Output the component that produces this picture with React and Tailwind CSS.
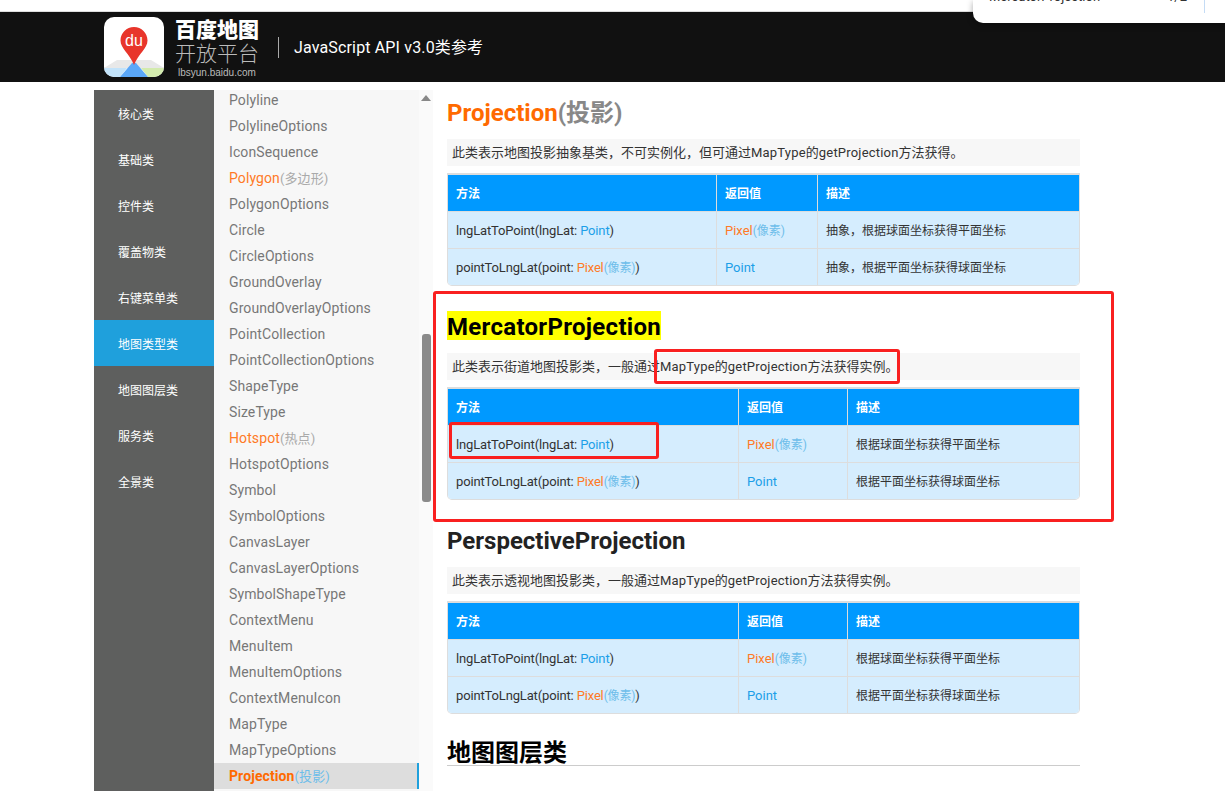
const tabs = ["核心类", "基础类", "控件类", "覆盖物类", "右键菜单类", "地图类型类", "地图图层类", "服务类", "全景类"];

const classes = [
  ["Polyline"],
  ["PolylineOptions"],
  ["IconSequence"],
  ["Polygon", "(多边形)"],
  ["PolygonOptions"],
  ["Circle"],
  ["CircleOptions"],
  ["GroundOverlay"],
  ["GroundOverlayOptions"],
  ["PointCollection"],
  ["PointCollectionOptions"],
  ["ShapeType"],
  ["SizeType"],
  ["Hotspot", "(热点)"],
  ["HotspotOptions"],
  ["Symbol"],
  ["SymbolOptions"],
  ["CanvasLayer"],
  ["CanvasLayerOptions"],
  ["SymbolShapeType"],
  ["ContextMenu"],
  ["MenuItem"],
  ["MenuItemOptions"],
  ["ContextMenuIcon"],
  ["MapType"],
  ["MapTypeOptions"],
];

function Logo() {
  return (
    <svg width="60" height="60" viewBox="0 0 60 60" className="shrink-0">
      <defs>
        <clipPath id="logo-clip">
          <rect width="60" height="60" rx="10" />
        </clipPath>
      </defs>
      <g clipPath="url(#logo-clip)">
        <rect width="60" height="60" fill="#fff" />
        <path d="M13 43h34l13 8H0z" fill="#e8e8e8" />
        <path d="M0 51h23L16 60H0z" fill="#c3e3fa" />
        <path d="M60 51H37l7 9h16z" fill="#d3ebae" />
        <path d="M28 46h4l12 14H16z" fill="#5aa7f8" />
        <path d="M30 10c-7.500 0-13.500 6-13.500 13.500 0 8 9 13 13.500 24.500 4.500-11.500 13.500-16.500 13.500-24.500C43.500 16 37.500 10 30 10z" fill="#e8352b" />
        <text x="30" y="29" textAnchor="middle" fontSize="16" fontWeight="500" fill="#fff" fontFamily="Liberation Sans, sans-serif">du</text>
      </g>
    </svg>
  );
}

function PixelLink() {
  return (
    <>
      <span className="text-[#ff7a26]">Pixel</span>
      <span className="text-[12px] text-[#6dbdea]">(像素)</span>
    </>
  );
}

function PointLink() {
  return <span className="text-[#1c9fe8]">Point</span>;
}

function MethodTable({ cols, rows }) {
  return (
    <div className="border border-t-2 border-[#dddddd] rounded-b-[5px] overflow-hidden text-[13px] leading-[38px] text-[#333]">
      <div className={`grid ${cols} bg-[#0099ff] text-white text-[12px] font-bold h-[36px] divide-x divide-[#dddddd]`}>
        <div className="pl-2">方法</div>
        <div className="pl-2">返回值</div>
        <div className="pl-2">描述</div>
      </div>
      {rows.map((row, i) => (
        <div key={i} className={`grid ${cols} bg-[#d5edfe] border-t border-[#dddddd] h-[37px] divide-x divide-[#dddddd]`}>
          <div className="pl-2 tracking-[-0.15px]">{row[0]}</div>
          <div className="pl-2">{row[1]}</div>
          <div className="pl-2 text-[12px]">{row[2]}</div>
        </div>
      ))}
    </div>
  );
}

function Latin({ children }) {
  return <span className="tracking-[0.2px]">{children}</span>;
}

function Desc({ before, after }) {
  return (
    <p className="mt-[13px] mb-[7px] h-[27px] bg-[#f7f7f7] pl-[5px] text-[13px] leading-[28px] text-[#333]">
      {before}
      <Latin>MapType</Latin>的<Latin>getProjection</Latin>
      {after}
    </p>
  );
}

export default function App() {
  const toPoint = <>lngLatToPoint(lngLat: <PointLink />)</>;
  const toLngLat = <>pointToLngLat(point: <PixelLink />)</>;
  const wide = "grid-cols-[291px_109px_1fr]";

  return (
    <div className="relative h-[791px] overflow-hidden bg-white font-['Roboto','Noto_Sans_CJK_SC',sans-serif]">
      <div className="mt-[11px] h-px bg-[#dddddd]" />
      <header className="flex h-[70px] items-center bg-[#111111] pl-[104px]">
        <Logo />
        <div className="ml-[11px] flex w-[86px] flex-col pt-[4px]">
          <span className="text-[21px] font-black leading-[24px] text-white whitespace-nowrap">百度地图</span>
          <span className="text-[21px] font-light leading-[24px] text-[#bbbbbb] whitespace-nowrap">开放平台</span>
          <span className="font-['Liberation_Sans',sans-serif] text-[10px] leading-[14px] text-[#bbbbbb] pl-[3px]">lbsyun.baidu.com</span>
        </div>
        <div className="ml-[17px] h-[21px] w-px bg-[#aaaaaa]" />
        <h1 className="ml-[15px] pt-[2px] text-[16px] tracking-[0.15px] text-white">JavaScript API v3.0类参考</h1>
      </header>

      <div className="mt-[8px] flex pl-[94px]">
        <nav className="h-[701px] w-[120px] shrink-0 bg-[#5e5f5e]">
          {tabs.map((tab, i) => (
            <div key={tab} className={`h-[46px] pl-[24px] text-[12px] leading-[50px] text-white ${i === 5 ? "bg-[#1fa0dc]" : ""}`}>
              {tab}
            </div>
          ))}
        </nav>

        <div className="h-[701px] w-[205px] shrink-0 overflow-hidden bg-[#f7f7f7]">
          <ul className="-mt-[3px] text-[14px] leading-[26px] tracking-[0.1px] text-[#777]">
            {classes.map(([name, note]) => (
              <li key={name} className="h-[26px] pl-[15px]">
                {note ? <span className="text-[#ff7a26]">{name}</span> : name}
                {note && <span className="text-[13px] text-[#aaaaaa]">{note}</span>}
              </li>
            ))}
            <li className="h-[26px] border-r-2 border-[#1fa0dc] bg-[#dddddd] pl-[15px] font-bold text-[#ff6a00]">
              Projection<span className="text-[13px] font-normal text-[#6dbdea]">(投影)</span>
            </li>
          </ul>
        </div>

        <div className="relative h-[701px] w-[14px] shrink-0 bg-[#fafafa]">
          <div className="absolute left-[2px] top-[5px] h-0 w-0 border-x-[5px] border-b-[6px] border-x-transparent border-b-[#888888]" />
          <div className="absolute left-[3px] top-[244px] h-[168px] w-[9px] rounded-[3px] bg-[#8a8a8a]" />
        </div>

        <main className="ml-[14px] w-[633px] pt-[7px]">
          <h2 className="h-[29px] text-[24px] font-bold leading-[32px]">
            <span className="text-[#ff6a00]">Projection</span>
            <span className="text-[#888888]">(投影)</span>
          </h2>
          <Desc before="此类表示地图投影抽象基类，不可实例化，但可通过" after="方法获得。" />
          <MethodTable
            cols="grid-cols-[269px_101px_1fr]"
            rows={[
              [toPoint, <PixelLink />, "抽象，根据球面坐标获得平面坐标"],
              [toLngLat, <PointLink />, "抽象，根据平面坐标获得球面坐标"],
            ]}
          />

          <h2 className="mt-[25px] h-[29px] text-[24px] font-bold leading-[32px] text-black">
            <span className="inline-block h-[29px] bg-[#ffff00] tracking-[0.3px]">MercatorProjection</span>
          </h2>
          <Desc before="此类表示街道地图投影类，一般通过" after="方法获得实例。" />
          <MethodTable
            cols={wide}
            rows={[
              [toPoint, <PixelLink />, "根据球面坐标获得平面坐标"],
              [toLngLat, <PointLink />, "根据平面坐标获得球面坐标"],
            ]}
          />

          <h2 className="mt-[25px] h-[29px] text-[24px] font-bold leading-[32px] text-[#222]">PerspectiveProjection</h2>
          <Desc before="此类表示透视地图投影类，一般通过" after="方法获得实例。" />
          <MethodTable
            cols={wide}
            rows={[
              [toPoint, <PixelLink />, "根据球面坐标获得平面坐标"],
              [toLngLat, <PointLink />, "根据平面坐标获得球面坐标"],
            ]}
          />

          <h2 className="mt-[23px] h-[29px] border-b border-[#cccccc] text-[24px] font-bold leading-[32px] text-black">地图图层类</h2>
        </main>
      </div>

      {/* screenshot annotations */}
      <div className="absolute left-[433px] top-[291px] h-[231px] w-[681px] rounded-[3px] border-[3px] border-[#f92020]" />
      <div className="absolute left-[654px] top-[349px] h-[35px] w-[246px] rounded-[3px] border-[3px] border-[#f92020]" />
      <div className="absolute left-[449px] top-[422px] h-[37px] w-[210px] rounded-[3px] border-[3px] border-[#f92020]" />

      {/* find-in-page popup */}
      <div className="absolute right-0 top-0 h-[23px] w-[252px] overflow-hidden rounded-bl-[10px] bg-white shadow-[0_2px_6px_rgba(0,0,0,0.35)]">
        <div className="-mt-[12px] flex pl-[16px] pr-[38px] text-[13px] leading-[18px] text-[#333]">
          <span className="grow">MercatorProjection</span>
          <span>1/2</span>
        </div>
        <div className="absolute left-[231px] top-0 h-[13px] w-px bg-[#c5dcf5]" />
      </div>
    </div>
  );
}
